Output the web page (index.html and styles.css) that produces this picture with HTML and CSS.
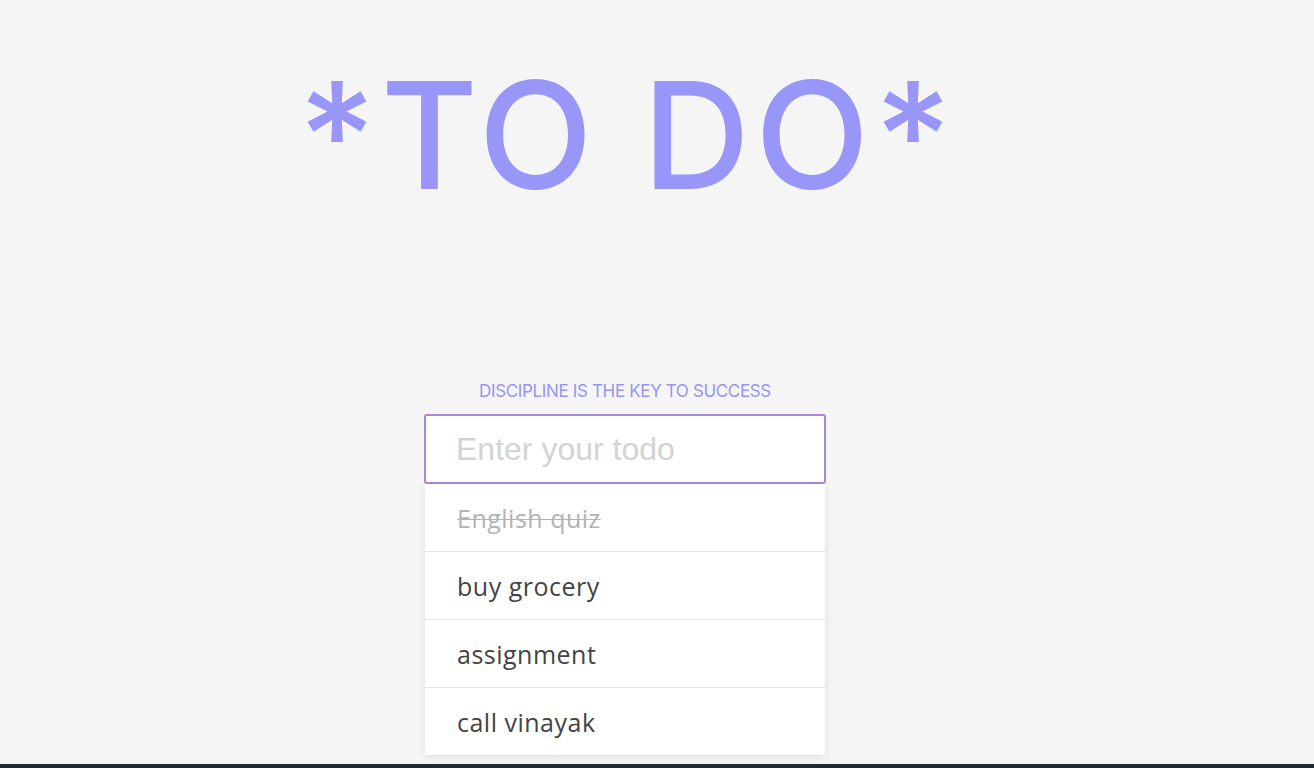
FILE: index.html
```html
<!DOCTYPE html>
<html lang="en">
<head>
<meta charset="utf-8">
<title>To Do</title>
<link rel="stylesheet" href="styles.css">
</head>
<body>
<div class="page">
  <main class="app">
    <h1 class="title">*TO DO*</h1>
    <p class="tagline">DISCIPLINE IS THE KEY TO SUCCESS</p>
    <div class="todo">
      <input class="todo-input" type="text" placeholder="Enter your todo">
      <ul class="todo-list">
        <li class="todo-item done">English quiz</li>
        <li class="todo-item">buy grocery</li>
        <li class="todo-item">assignment</li>
        <li class="todo-item">call vinayak</li>
      </ul>
    </div>
  </main>
  <div class="taskbar"></div>
</div>
</body>
</html>
```

FILE: styles.css
```css
* {
  box-sizing: border-box;
}

html, body {
  margin: 0;
  padding: 0;
  height: 100%;
}

body {
  background: #f5f5f5;
  font-family: "Open Sans", "Noto Sans", sans-serif;
  overflow: hidden;
}

.page {
  display: flex;
  flex-direction: column;
  height: 100vh;
}

.app {
  flex: 1;
  display: flex;
  flex-direction: column;
  align-items: center;
  padding-right: 64px;
  padding-top: 61px;
}

.title {
  margin: 0;
  height: 158px;
  font-family: "Inter", "Liberation Sans", sans-serif;
  font-weight: 500;
  font-size: 149px;
  line-height: 1;
  color: #9896f9;
  letter-spacing: 5px;
  padding-left: 5px;
}

.tagline {
  margin: 164px 0 0;
  font-family: "Inter", "Liberation Sans", sans-serif;
  font-size: 17px;
  line-height: 1;
  height: 17px;
  color: #9896f0;
  letter-spacing: -0.35px;
}

.todo {
  margin-top: 14px;
  width: 400px;
}

.todo-input {
  display: block;
  width: 402px;
  height: 70px;
  margin-left: -1px;
  padding: 0 30px;
  border: 2px solid #ab86d6;
  border-radius: 3px;
  background: #ffffff;
  font-family: "Liberation Sans", Arial, sans-serif;
  font-size: 32px;
  color: #444;
  outline: none;
}

.todo-input::placeholder {
  color: #d3d3d3;
}

.todo-list {
  list-style: none;
  margin: 0;
  padding: 0;
  background: #ffffff;
  box-shadow: 0 2px 8px rgba(0, 0, 0, 0.09);
}

.todo-item {
  height: 68px;
  display: flex;
  align-items: center;
  padding: 0 32px 0 32px;
  border-bottom: 1px solid #e2e2e2;
  font-size: 25px;
  color: #444444;
  letter-spacing: 0.5px;
}

.todo-item:last-child {
  border-bottom: none;
  height: 67px;
}

.todo-item.done {
  color: #b3b3b3;
  text-decoration: line-through;
  text-decoration-thickness: 1px;
}

.taskbar {
  height: 4px;
  flex: none;
  background: #1d2c2c;
}
```
